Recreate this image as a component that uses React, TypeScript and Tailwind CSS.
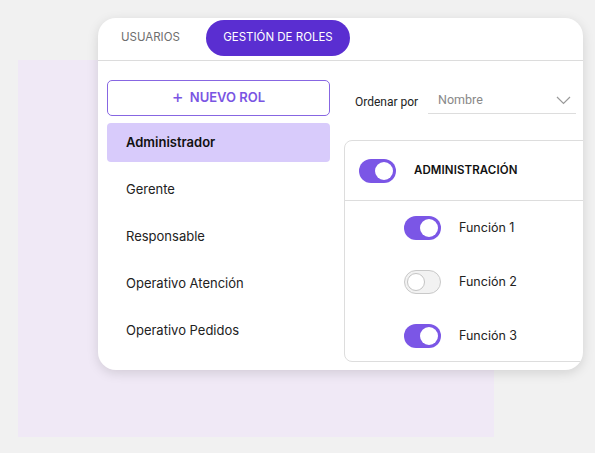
import React from 'react';

const roles = ['Administrador', 'Gerente', 'Responsable', 'Operativo Atención', 'Operativo Pedidos'];

const funciones = [
  { name: 'Función 1', on: true },
  { name: 'Función 2', on: false },
  { name: 'Función 3', on: true },
];

function Toggle({ on }: { on: boolean }) {
  if (on) {
    return (
      <div className="w-[37px] h-[24px] rounded-full bg-[#7b56e6] flex items-center justify-end pr-[3px] shrink-0">
        <div className="w-[18px] h-[18px] rounded-full bg-white" />
      </div>
    );
  }
  return (
    <div className="w-[37px] h-[24px] rounded-full bg-[#f2f2f2] border border-[#c9c9c9] flex items-center pl-[2px] shrink-0">
      <div className="w-[18px] h-[18px] rounded-full bg-white border border-[#c4c4c4]" />
    </div>
  );
}

export default function App() {
  return (
    <div
      className="relative w-[595px] h-[453px] bg-[#f1f1f1] overflow-hidden"
      style={{ fontFamily: 'Inter, "Noto Sans", sans-serif' }}
    >
      <div className="absolute left-[18px] top-[60px] w-[476px] h-[377px] bg-[#f0e9f6]" />

      <div className="absolute left-[98px] top-[18px] w-[485px] h-[352px] rounded-[18px] bg-white shadow-[0_3px_12px_rgba(0,0,0,0.13)] overflow-hidden flex flex-col">
        <div className="h-[43px] border-b border-[#dcdcdc] flex items-start pt-[2px] shrink-0">
          <div className="w-[108px] h-[36px] flex items-center pl-[23px] text-[11.5px] text-[#6e6e6e]">
            USUARIOS
          </div>
          <div className="w-[144px] h-[36px] rounded-full bg-[#5a2ed1] flex items-center justify-center text-[11.5px] text-white">
            GESTIÓN DE ROLES
          </div>
        </div>

        <div className="flex flex-1 min-h-0">
          <div className="w-[232px] pl-[9px] pt-[19px] shrink-0 flex flex-col">
            <button className="h-[36px] w-[223px] rounded-[5px] border border-[#8766e2] flex items-center justify-center gap-[6px] text-[#7a55e3] text-[13px] font-semibold">
              <span className="text-[18px] font-normal leading-none -mt-[2px]">+</span>
              NUEVO ROL
            </button>
            <div className="mt-[7px] flex flex-col gap-[8px]">
              {roles.map((r, i) => (
                <div
                  key={r}
                  className={
                    i === 0
                      ? 'h-[39px] w-[223px] rounded-[4px] bg-[#d8cbfb] flex items-center pl-[19px] text-[13px] font-semibold text-[#111]'
                      : 'h-[39px] w-[223px] flex items-center pl-[19px] text-[13px] text-[#222]'
                  }
                >
                  {r}
                </div>
              ))}
            </div>
          </div>

          <div className="flex-1 pl-[14px] flex flex-col">
            <div className="mt-[27px] h-[28px] flex items-center pl-[11px]" style={{ fontFamily: 'Roboto, sans-serif' }}>
              <span className="text-[12px] text-[#222] w-[73px]">Ordenar por</span>
              <div className="w-[148px] h-[26px] self-start border-b border-[#dddddd] flex items-center justify-between pl-[10px] pr-[5px] text-[12.5px] text-[#888]">
                <span>Nombre</span>
                <svg width="15" height="9" viewBox="0 0 15 9" fill="none">
                  <path d="M1 1l6.5 6.5L14 1" stroke="#9a9a9a" strokeWidth="1.2" />
                </svg>
              </div>
            </div>

            <div className="mt-[24px] w-[260px] h-[222px] border border-[#dddddd] rounded-tl-[8px] rounded-bl-[8px] flex flex-col overflow-hidden">
              <div className="h-[60px] border-b border-[#dddddd] flex items-center pl-[14px] gap-[18px] shrink-0">
                <Toggle on />
                <span className="text-[11.5px] font-semibold text-[#111] tracking-[0.1px]">ADMINISTRACIÓN</span>
              </div>
              {funciones.map((f) => (
                <div key={f.name} className="h-[54px] flex items-center pl-[59px] gap-[18px] shrink-0">
                  <Toggle on={f.on} />
                  <span className="text-[12.5px] text-[#222]">{f.name}</span>
                </div>
              ))}
            </div>
          </div>
        </div>
      </div>
    </div>
  );
}
